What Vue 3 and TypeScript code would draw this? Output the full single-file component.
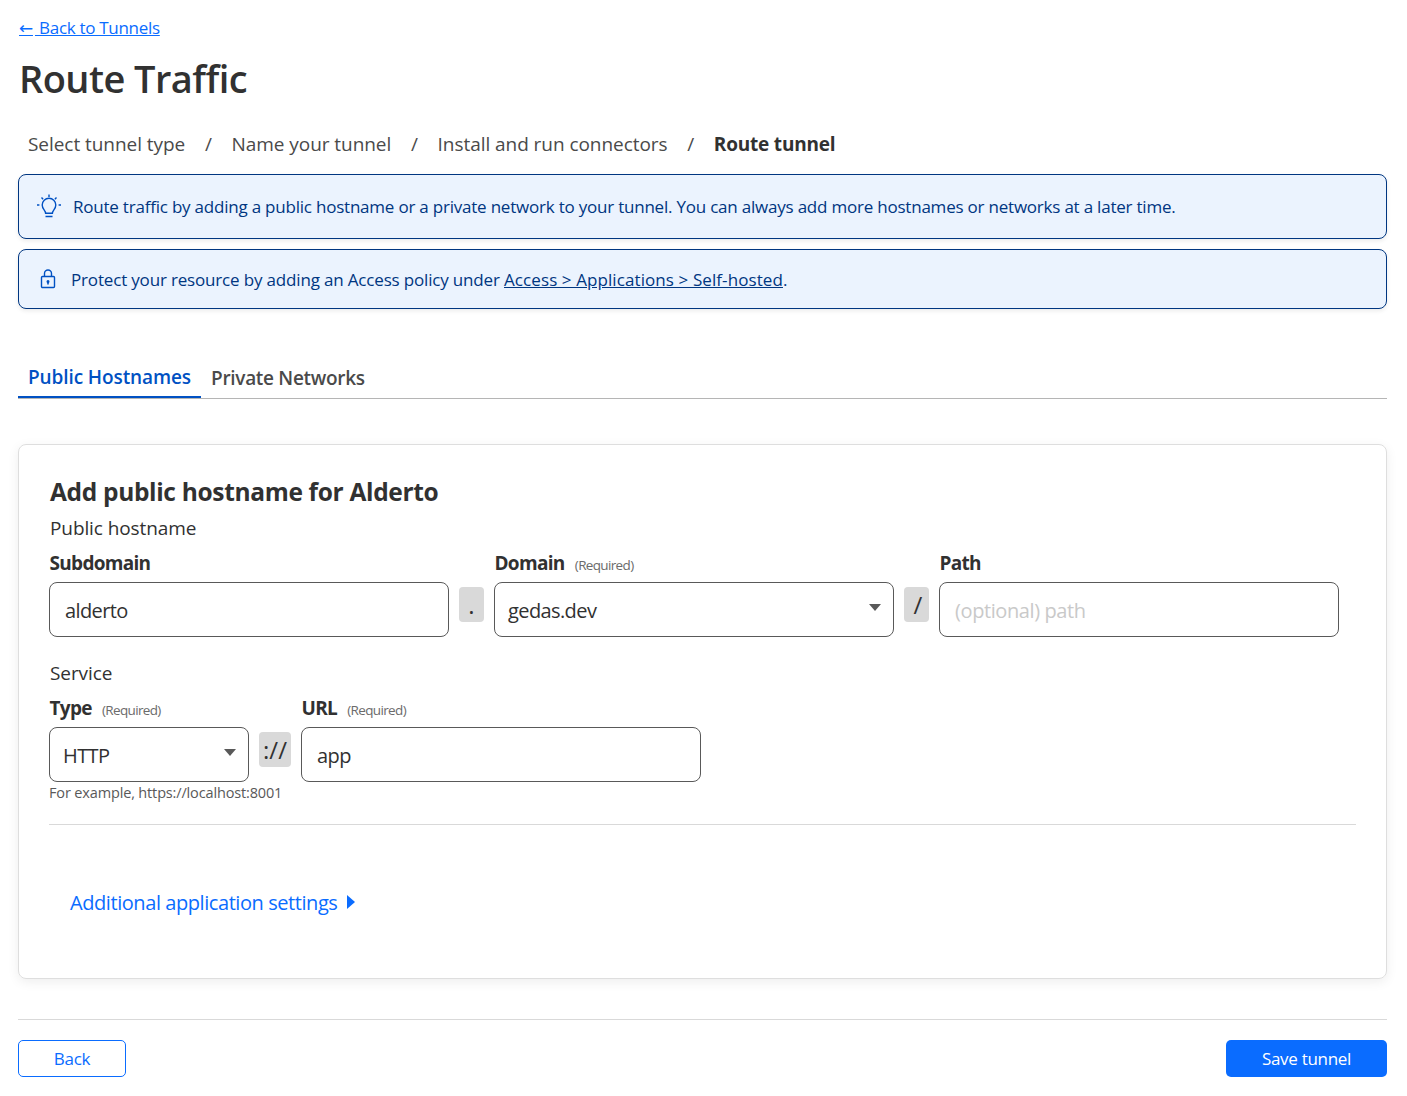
<script setup lang="ts">
const steps = ['Select tunnel type', 'Name your tunnel', 'Install and run connectors'];
</script>

<template>
  <main class="page">
    <a class="back-link" href="#"><span class="arrow">←</span> Back to Tunnels</a>
    <h1 class="title">Route Traffic</h1>

    <nav class="steps">
      <template v-for="step in steps" :key="step">
        <span class="step">{{ step }}</span>
        <span class="step-sep">/</span>
      </template>
      <strong class="step current">Route tunnel</strong>
    </nav>

    <div class="alert alert-tip">
      <svg class="tip-icon" width="26" height="26" viewBox="0 0 26 26" fill="none" stroke="#0051c3" stroke-width="1.4">
        <path d="M9.6 19.2c0-3-3.4-4-3.4-8.2a6.8 6.8 0 0 1 13.6 0c0 4.2-3.4 5.200-3.4 8.2z" />
        <path d="M9.5 22.5h7M13 0.500v2.500M5.500 3.500l1.600 1.700M20.500 3.500l-1.600 1.700M1 11h2.400M22.600 11H25" />
      </svg>
      <span>Route traffic by adding a public hostname or a private network to your tunnel. You can always add more hostnames or networks at a later time.</span>
    </div>
    <div class="alert alert-lock">
      <svg class="lock-icon" width="16" height="20" viewBox="0 0 16 20" fill="none" stroke="#0051c3" stroke-width="1.4">
        <rect x="1.500" y="7.500" width="13" height="11" rx="1" />
        <path d="M4.500 7.500V4.500a3.500 3.500 0 0 1 7 0v3" />
        <path d="M8 12.500v3" stroke-width="1.600" />
        <circle cx="8" cy="12.600" r=".8" fill="#0051c3" />
      </svg>
      <span>Protect your resource by adding an Access policy under <a href="#">Access &gt; Applications &gt; Self-hosted</a>.</span>
    </div>

    <div class="tabs">
      <button class="tab active">Public Hostnames</button>
      <button class="tab">Private Networks</button>
    </div>

    <section class="card">
      <h2 class="card-title">Add public hostname for Alderto</h2>
      <p class="group-label">Public hostname</p>
      <div class="field-row">
        <div class="field">
          <label>Subdomain</label>
          <div class="control">alderto</div>
        </div>
        <span class="chip chip-dot">.</span>
        <div class="field">
          <label>Domain <small>(Required)</small></label>
          <div class="control select narrow-pad">gedas.dev<i class="caret"></i></div>
        </div>
        <span class="chip chip-slash">/</span>
        <div class="field">
          <label>Path</label>
          <div class="control placeholder">(optional) path</div>
        </div>
      </div>

      <p class="group-label service">Service</p>
      <div class="field-row">
        <div class="field type">
          <label>Type <small>(Required)</small></label>
          <div class="control select narrow-pad">HTTP<i class="caret"></i></div>
        </div>
        <span class="chip chip-scheme">://</span>
        <div class="field">
          <label>URL <small>(Required)</small></label>
          <div class="control">app</div>
        </div>
      </div>
      <p class="hint">For example, https://localhost:8001</p>

      <hr class="divider" />

      <a class="additional" href="#">Additional application settings<i class="caret-right"></i></a>
    </section>

    <footer class="footer">
      <button class="btn btn-back">Back</button>
      <button class="btn btn-save">Save tunnel</button>
    </footer>
  </main>
</template>

<style>
html,
body {
  background: #fff;
}
</style>

<style scoped>
.page {
  box-sizing: border-box;
  width: 1407px;
  height: 1096px;
  padding: 16px 20px 0 18px;
  font-family: "Open Sans", "Noto Sans", sans-serif;
  color: #313131;
  overflow: hidden;
}

.back-link {
  display: inline-block;
  font-size: 17px;
  line-height: 24px;
  color: #0a6cff;
  text-decoration: underline;
  letter-spacing: -0.3px;
  margin-left: 1px;
}

.arrow {
  font-family: "DejaVu Sans", sans-serif;
  margin-right: 2px;
}

.title {
  margin: 12px 0 0 1px;
  font-size: 38px;
  line-height: 52px;
  font-weight: 600;
  letter-spacing: -0.55px;
  color: #313131;
}

.steps {
  display: flex;
  align-items: center;
  margin-top: 22px;
  height: 36px;
  padding-left: 10px;
  font-size: 19px;
  letter-spacing: -0.05px;
  color: #4a4a4a;
}

.step-sep {
  margin: 0 19.7px;
}

.step.current {
  color: #313131;
  font-weight: 700;
  letter-spacing: -0.2px;
}

.alert {
  box-sizing: border-box;
  display: flex;
  align-items: center;
  border: 1px solid #003681;
  border-radius: 8px;
  background: #ebf3fe;
  box-shadow: 0 2px 4px rgba(0, 0, 0, 0.08);
  color: #003681;
  font-size: 17px;
}

.alert-tip {
  height: 65px;
  margin-top: 12px;
  padding-left: 17px;
  gap: 11px;
  letter-spacing: -0.216px;
}

.alert-lock {
  height: 60px;
  margin-top: 10px;
  padding-left: 21px;
  gap: 15px;
  letter-spacing: -0.17px;
}

.alert a {
  color: inherit;
  text-decoration: underline;
  letter-spacing: 0.09px;
}

.tabs {
  display: flex;
  margin-top: 46px;
  height: 43px;
  border-bottom: 1px solid #b5b5b5;
}

.tab {
  height: 43px;
  padding: 4px 10px 0;
  border: 0;
  border-bottom: 2px solid transparent;
  background: none;
  font-family: inherit;
  font-size: 19px;
  font-weight: 600;
  letter-spacing: -0.3px;
  color: #4a4a4a;
}

.tab.active {
  padding-top: 2px;
  letter-spacing: -0.1px;
  color: #0051c3;
  border-bottom-color: #0051c3;
}

.card {
  box-sizing: border-box;
  height: 535px;
  margin-top: 45px;
  padding: 30px 30px 0;
  border: 1px solid #dedede;
  border-radius: 8px;
  box-shadow: 0 3px 12px rgba(0, 0, 0, 0.07);
}

.card-title {
  margin: 0 0 0 1px;
  font-size: 24.5px;
  line-height: 34px;
  font-weight: 700;
  letter-spacing: -0.33px;
  color: #313131;
}

.group-label {
  margin: 5px 0 0 1px;
  font-size: 19px;
  line-height: 28px;
  letter-spacing: -0.1px;
  color: #313131;
}

.group-label.service {
  margin-top: 22px;
}

.field-row {
  display: flex;
  gap: 10px;
  margin-top: 7px;
}

.field {
  width: 400px;
}

.field.type {
  width: 200px;
}

.field label {
  display: block;
  height: 33px;
  line-height: 28px;
  margin-left: 0.5px;
  font-size: 19px;
  font-weight: 700;
  letter-spacing: -0.7px;
  color: #313131;
}

.field small {
  margin-left: 6px;
  font-size: 13.5px;
  font-weight: 400;
  letter-spacing: -0.65px;
  color: #6b6b6b;
}

.control {
  box-sizing: border-box;
  position: relative;
  display: flex;
  align-items: center;
  height: 55px;
  padding: 2px 15px 0;
  border: 1px solid #595959;
  border-radius: 8px;
  background: #fff;
  font-size: 20px;
  letter-spacing: -0.6px;
  color: #313131;
}

.control.narrow-pad {
  padding-left: 13px;
}

.control.placeholder {
  letter-spacing: -0.4px;
  color: #c9c9c9;
}

.caret {
  position: absolute;
  right: 12px;
  top: 21px;
  width: 0;
  height: 0;
  border-left: 6px solid transparent;
  border-right: 6px solid transparent;
  border-top: 7px solid #595959;
}

.chip {
  box-sizing: border-box;
  display: flex;
  align-items: center;
  justify-content: center;
  height: 35px;
  margin-top: 38px;
  border-radius: 4px;
  background: #d9d9d9;
  font-size: 24px;
  color: #313131;
}

.chip-dot {
  width: 25px;
}

.chip-slash {
  width: 25px;
  padding-left: 3px;
}

.chip-scheme {
  width: 32px;
}

.hint {
  margin: 0;
  font-size: 14.5px;
  line-height: 22px;
  letter-spacing: -0.15px;
  color: #595959;
}

.divider {
  margin: 20px 0 0;
  border: 0;
  border-top: 1px solid #d9d9d9;
}

.additional {
  display: inline-flex;
  align-items: center;
  margin: 63px 0 0 21px;
  font-size: 20px;
  line-height: 30px;
  letter-spacing: -0.43px;
  color: #0a6cff;
  text-decoration: none;
}

.caret-right {
  margin: -2px 0 0 10px;
  width: 0;
  height: 0;
  border-top: 7px solid transparent;
  border-bottom: 7px solid transparent;
  border-left: 8px solid #0a6cff;
}

.footer {
  display: flex;
  justify-content: space-between;
  align-items: flex-start;
  margin-top: 40px;
  padding-top: 20px;
  border-top: 1px solid #d9d9d9;
}

.btn {
  box-sizing: border-box;
  height: 37px;
  border-radius: 5px;
  font-family: inherit;
  font-size: 17px;
  letter-spacing: -0.3px;
}

.btn-back {
  width: 108px;
  border: 1px solid #0a6cff;
  background: #fff;
  color: #0a6cff;
}

.btn-save {
  width: 161px;
  border: 0;
  background: #0a6cff;
  color: #fff;
}
</style>
